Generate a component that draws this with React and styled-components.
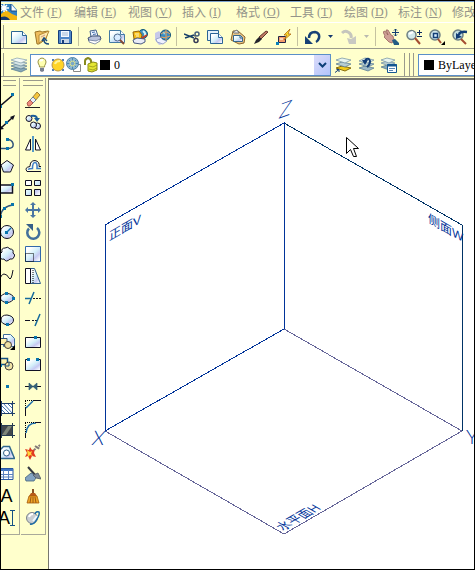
import React from 'react'
import styled, { createGlobalStyle } from 'styled-components'

const navy = '#0c3f77'
const ink = '#111122'

// All toolbar glyphs live on a 16 x 16 grid
const icons = {
    app: <>
        <path d="M0 0h11l5 6v10H0z" fill="#2f7fc1" />
        <path d="M0 10 5 6l6 4 5 2v4H0z" fill="#f2b50f" />
        <path d="M0 13q6-2 9 3H0z" fill="#14386e" />
        <path d="M3 0v8M0 4h8M0 1l6 6M6 1 0 7" stroke="#fff" strokeWidth="1.500" />
        <path d="M10 0v7h6z" fill="#fff" />
        <path d="M10 0v7h6" fill="none" stroke="#18487f" />
    </>,
    blank: <>
        <path d="M.5 2.500h11l4 4v8H.5z" fill="url(#pane)" stroke="#2c6794" />
        <path d="M11.500 2.500v4h4" fill="#fff" stroke="#2c6794" />
        <path d="M0 14.500h16" stroke="#173f63" />
    </>,
    open: <>
        <path d="M1 3l5-1 2 1 6-1-2 8-7 5H3z" fill="#efbd5d" stroke="#9b7426" />
        <path d="M5 6l10-4-3 7-7 5z" fill="#ffe9ad" stroke="#b88a35" />
        <path d="M7 8l4-2" stroke="#c98" />
        <path d="M15 15q-5 0-5-4M8 12l2-3 3 3" fill="none" stroke="#174a80" strokeWidth="1.500" />
    </>,
    save: <>
        <path d="M1.500 1.500h12l1 1v12h-13z" fill="#4f86c8" stroke="#173f7d" />
        <path d="M4 2h8v6H4z" fill="#f4f8ff" />
        <path d="M5 4h6M5 6h6" stroke="#9fb6d3" />
        <path d="M4 10h8v4H4z" fill="#c8d5e7" />
        <path d="M5 11h2v3H5z" fill="#173f7d" />
    </>,
    print: <>
        <path d="M4 2l6-1 2 6-7 1z" fill="#eaf3ff" stroke="#46658d" />
        <path d="M6 3.500l3-.5M7 5.500l3-.5" stroke="#4972ad" />
        <path d="M2 9l4-2 8 0 1 3-4 3-8-1z" fill="#b9c3dd" stroke="#3f5075" />
        <path d="M3 11l7 1 4-2v2l-5 3-6-2z" fill="#fff" stroke="#596a91" strokeWidth=".7" />
    </>,
    preview: <>
        <path d="M.5 1.500h11l4 4v8H.5z" fill="url(#pane)" stroke="#447aa3" />
        <path d="M11.500 1.500v4h4" fill="#fff" stroke="#447aa3" />
        <circle cx="8.500" cy="8.500" r="3.500" fill="#d7ebff" stroke="#536f91" />
        <path d="M11 11l4 4" stroke="#824a37" strokeWidth="2" />
    </>,
    publish: <>
        <circle cx="11" cy="5" r="4.500" fill="#3d8fbf" stroke="#12597b" />
        <path d="M11 2q3 2 2 5" stroke="#d6f3f5" fill="none" strokeWidth="2" />
        <path d="M1 3l6-1 3 4-1 4H2z" fill="#f6bd16" stroke="#93620a" />
        <path d="M3 5h4M4 7h3" stroke="#fff7ca" />
        <path d="M1 11l4-2 8 1v3l-4 2-7-1z" fill="#e9ecf7" stroke="#485982" />
        <path d="M10 9l5-3" stroke="#c53b20" strokeWidth="1.500" />
    </>,
    dwf: <>
        <path d="M0 4l4-2 5 5-1 8-4 1-4-5z" fill="#c7c9ea" />
        <path d="M1 10l6-2 5 4-4 3-6-2z" fill="#eff1ff" stroke="#9ca6ca" />
        <circle cx="10.500" cy="6" r="5" fill="#378cc3" stroke="#125176" />
        <path d="M6 5q5-4 9 0M11 1v10M6 8q4 2 9-1" fill="none" stroke="#e8a15d" />
        <path d="M8 3l2 1-1 2z" fill="#b7eef0" />
    </>,
    cut: <>
        <path d="M0 5l10 4M1 9l9-3" stroke="#173f68" strokeWidth="1.500" />
        <circle cx="13" cy="5" r="2" fill="none" stroke="#45607e" strokeWidth="1.500" />
        <circle cx="12" cy="11.500" r="2" fill="none" stroke="#353955" strokeWidth="1.500" />
        <path d="M10 6l2 3" stroke="#555" />
    </>,
    copy: <>
        <path d="M.5 1.500h11v10H.5z" fill="#e5f2f9" stroke="#2b6496" />
        <path d="M3.500 4.500h8l4 4v6h-12z" fill="url(#pane)" stroke="#2b6496" />
        <path d="M11.500 4.500v4h4" fill="#fff" stroke="#2b6496" />
    </>,
    paste: <>
        <path d="M3 2h5l7 6-1 6-5 1-8-4z" fill="#e8c586" stroke="#8b632b" />
        <path d="M3 3l4-2 2 3H4z" fill="#eee" stroke="#777" />
        <path d="M3.500 6.500h7l2 2v4h-9z" fill="url(#pane)" stroke="#35668b" />
        <path d="M10 6v3h3" fill="none" stroke="#35668b" />
    </>,
    brush: <>
        <path d="M13 2l2 1-7 7-2-2z" fill="#bd7860" stroke="#633630" />
        <path d="M6 8l3 2-3 3-5 2 2-4z" fill="#24252c" />
    </>,
    block: <>
        <path d="M2.500 7.500h7v6h-7z" fill="#f39b6d" stroke="#242447" />
        <path d="M4 9h3v2H4z" fill="#ffd4b5" />
        <path d="M0 13h3v3H0z" fill="#087fba" />
        <path d="M14 0L8 6h3L8 11l7-6h-3z" fill="#ffe22b" stroke="#b06712" strokeWidth=".8" />
    </>,
    undo: <>
        <path d="M4 9q0-6 6-6 5 1 4 6-1 3-3 4" fill="none" stroke="#174176" strokeWidth="2.500" />
        <path d="M0 7v8h8z" fill="#174176" />
    </>,
    redo: <>
        <path d="M1 4q3-3 6-1 4 2 3 6" fill="none" stroke="#c5c5bd" strokeWidth="3" />
        <path d="M6 9l4 1 5-3v8H8z" fill="#c9c9c2" />
    </>,
    pan: <>
        <path d="M0 3l2-1 3 4-2-5 2 0 3 5 2 1 1 4-2 3-3-1-5-5 1-1z" fill="#cf9f96" stroke="#8d5553" strokeWidth=".7" />
        <path d="M9 11l3-1 4 4v2h-5z" fill="#235b83" />
        <path d="M12.500 0v7M9 3.500h7M11 1.500L12.500 0 14 1.500M11 5.500L12.500 7 14 5.500" fill="none" stroke="#123f72" />
    </>,
    zoom: <>
        <circle cx="5.500" cy="6" r="4.500" fill="#d2e9ea" stroke="#6f8184" strokeWidth="1.500" />
        <path d="M3 5l4-2" stroke="#fff" strokeWidth="2" />
        <path d="M9 9l5 6" stroke="#a54d31" strokeWidth="2" />
        <path d="M13.500 1v5M11 3.500h5M11 7.500h5" stroke="#0b2b60" />
    </>,
    zoomWin: <>
        <circle cx="6" cy="6" r="5" fill="#cfe5ea" stroke="#6f8184" strokeWidth="1.500" />
        <path d="M4.500 4.500h4v4h-4z" fill="#dcf1ff" stroke="#123d76" strokeWidth="1.500" />
        <path d="M9 10l3 4" stroke="#a54d31" strokeWidth="2" />
        <path d="M16 12v4h-4z" fill="#000" />
    </>,
    zoomPrev: <>
        <circle cx="6" cy="6" r="5" fill="#c2ddde" stroke="#6f8184" strokeWidth="1.500" />
        <path d="M9 10l5 5" stroke="#a54d31" strokeWidth="2" />
        <path d="M7 6q0-4 8-3" fill="none" stroke="#123d76" strokeWidth="2.500" />
        <path d="M4 4v6l6-2z" fill="#123d76" />
    </>,
    layers: <>
        <path d="M0 12l6-2 10 2-6 3z" fill="#87a9b7" stroke="#50748e" strokeWidth=".7" />
        <path d="M0 9l6-2 10 2-6 3z" fill="#b7cdd1" stroke="#50748e" strokeWidth=".7" />
        <path d="M0 6l6-2 10 2-6 3z" fill="#d8e7e7" stroke="#6d8ca0" strokeWidth=".7" />
        <path d="M0 3l6-2 10 2-6 3z" fill="#f3f9f6" stroke="#829eae" strokeWidth=".7" />
    </>,
    layerSet: <>
        <path d="M1 11l6-2 9 2-6 3z" fill="#f2ca18" stroke="#876c0b" />
        <path d="M1 7l6-2 9 2-6 3z" fill="#b7cdd1" stroke="#50748e" strokeWidth=".7" />
        <path d="M1 3l6-2 9 2-6 3z" fill="#e8f4ee" stroke="#6d8ca0" strokeWidth=".7" />
        <path d="M0 15.500l4-3M1.500 12.500H4V15" fill="none" stroke="#123d76" />
    </>,
    layerPrev: <>
        <path d="M1 11l6-2 9 2-6 3z" fill="#9db9c5" stroke="#50748e" strokeWidth=".7" />
        <path d="M1 7l6-2 9 2-6 3z" fill="#b7cdd1" stroke="#50748e" strokeWidth=".7" />
        <path d="M1 4l6-3 9 2-6 3z" fill="#e8f4ee" stroke="#6d8ca0" strokeWidth=".7" />
        <path d="M7 3q4-3 5 1 0 4-3 6" fill="none" stroke="#123d76" strokeWidth="2" />
        <path d="M4 3h6l-3 5z" fill="#123d76" />
    </>,
    layerStates: <>
        <path d="M0 10l6-2 8 2-6 3z" fill="#87a9b7" stroke="#50748e" strokeWidth=".7" />
        <path d="M0 6l6-2 8 2-6 3z" fill="#b7cdd1" stroke="#6d8ca0" strokeWidth=".7" />
        <path d="M0 3l6-2 8 2-6 3z" fill="#e8f4ee" stroke="#6d8ca0" strokeWidth=".7" />
        <path d="M6.500 7.500h9v8h-9z" fill="#fff" stroke="#155791" />
        <path d="M6 8.500h10" stroke="#155791" strokeWidth="2" />
        <path d="M8 11.500h6M8 13.500h4" stroke="#5986b3" />
    </>,
    bulb: <>
        <path d="M5.500 10q0-2-1-3a4 4 0 1 1 7 0q-1 1-1 3z" fill="#ffffb0" stroke="#9a9448" />
        <path d="M6 4q1-1 3-1" stroke="#fff" strokeWidth="2" fill="none" />
        <path d="M6 11h4v3l-2 1-2-1z" fill="#787f90" />
    </>,
    sun: <>
        <path d="M2 2h2v2H2zM12 2h2v2h-2zM2 12h2v2H2zM12 12h2v2h-2z" fill="#4d7cb8" />
        <circle cx="8" cy="8" r="6" fill="#ffd428" stroke="#b9964a" />
        <path d="M5 7q1-3 5-3" fill="none" stroke="#fff49c" strokeWidth="2" />
    </>,
    freeze: <>
        <path d="M7.500 7.500h7v7h-7z" fill="#fff" stroke="#888" />
        <circle cx="6.500" cy="6.500" r="6" fill="#8fb9d2" stroke="#5184a9" />
        <path d="M6.500 1v11M1 6.500h11M3 3l7 7M3 10l7-7" stroke="#4a87b4" />
        <circle cx="6.500" cy="6.500" r="2.500" fill="#7aa9c6" stroke="#e7e88d" />
    </>,
    lock: <>
        <path d="M3 8V4q0-2 3-3 4 1 3 6" fill="none" stroke="#87891e" strokeWidth="2" />
        <path d="M6 7l5-2 4 1v7l-5 2-4-1z" fill="#e4e632" stroke="#8b8b15" />
        <path d="M7 9l4 1 4-2M7 12l4 1 4-2" fill="none" stroke="#8b8b15" strokeWidth=".7" />
    </>,
    line: <>
        <path d="M1 14L14 3" stroke={ink} strokeWidth="1.500" />
        <path d="M0 13h3v3H0zM12 1h3v3h-3z" fill="#0875ad" />
    </>,
    ray: <>
        <path d="M1 15L14 3" stroke={ink} strokeWidth="1.500" />
        <path d="M16 1l-2 5-3-3zM0 16l1-5 4 4z" fill={ink} />
        <path d="M6 7h3v3H6z" fill="#0875ad" />
    </>,
    polyline: <>
        <path d="M0 12.500h9q6 0 5-5-1-4-6-4" fill="none" stroke="#31547c" strokeWidth="1.500" />
        <path d="M7 2h3v3H7zM7 11h3v3H7z" fill="#0875ad" />
    </>,
    polygon: <path d="M8 2.500l6.500 4.500-3 7h-7L2 7z" fill="url(#pane)" stroke={ink} />,
    rect: <>
        <path d="M.5 5h13v8H.5z" fill="url(#pane)" stroke={ink} strokeWidth="1.500" />
        <path d="M12 3h3v3h-3zM0 11h2v3H0z" fill="#0875ad" />
    </>,
    arc: <>
        <path d="M1 15Q3 4 14 3" fill="none" stroke="#31547c" strokeWidth="1.500" />
        <path d="M12 1h3v3h-3zM4 5h3v3H4zM0 13h3v3H0z" fill="#0875ad" />
    </>,
    circle: <>
        <circle cx="8" cy="8" r="6.500" fill="url(#pane)" stroke={ink} />
        <path d="M8 8l4-4" stroke="#146ead" strokeWidth="1.500" />
        <path d="M6 7h3v3H6z" fill="#0875ad" />
    </>,
    cloud: <path d="M3 6q-1-4 3-4 3-2 5 1 4 0 3 4 3 2 1 4-1 3-4 2-4 4-6 0-4 1-4-3 0-3 2-4z" fill="url(#pane)" stroke={ink} />,
    spline: <path d="M0 14Q2 6 5 6t5 4 4-8" fill="none" stroke={ink} />,
    ellipse: <>
        <ellipse cx="8" cy="8" rx="6.500" ry="4.500" fill="url(#pane)" stroke={ink} />
        <path d="M6 2h3v3H6zM13 7h3v3h-3zM6 11h3v3H6z" fill="#0875ad" />
    </>,
    ellipseArc: <>
        <path d="M2 8q0-5 6-5 6.500 1 6.500 5T9 13Q2 12 2 8" fill="url(#pane)" stroke={ink} />
        <path d="M7 11h3v3H7z" fill="#0875ad" />
    </>,
    insert: <>
        <path d="M4.500 .5h7l4 4v8h-11z" fill="url(#pane)" stroke="#3e6f9c" />
        <path d="M0 4.500h8v6H0z" fill="#fff2ac" stroke="#31547c" />
        <circle cx="9" cy="11" r="3.500" fill="#efe2a5" stroke="#453f3a" />
        <path d="M16 11v5h-5z" fill="#000" />
    </>,
    makeBlock: <>
        <path d="M1.500 2.500h7v6h-7z" fill="#fff2ac" stroke="#145184" strokeWidth="1.500" />
        <circle cx="10" cy="10" r="4" fill="#efe2a5" stroke="#453f3a" />
        <path d="M10 6v4H6" fill="none" stroke="#145184" />
        <path d="M0 8h3v3H0z" fill="#0875ad" />
    </>,
    point: <path d="M7 7h3v3H7z" fill="#0875ad" />,
    hatch: <>
        <path d="M2 3h12v10H2z" fill="#fff" />
        <path d="M2 9l4 4M2 5l8 8M4 3l9 10M8 3l6 6M11 3l3 3" stroke="#4578ab" />
        <path d="M0 3.500h16M0 13.500h16M2.500 1v15M13.500 1v15" stroke="#203f6a" />
    </>,
    gradient: <>
        <path d="M2 3h12v10H2z" fill="#42474c" />
        <path d="M3 13L9 4h4L7 13z" fill="#7d8478" />
        <path d="M0 3.500h16M0 13.500h16M2.500 1v15M13.500 1v15" stroke="#253a52" />
    </>,
    region: <>
        <path d="M.5 14.500v-8l4-4h6l5 12z" fill="url(#pane)" stroke="#31678e" strokeWidth="1.500" />
        <circle cx="7.500" cy="9" r="3" fill="#fff" stroke="#315f85" />
    </>,
    table: <>
        <path d="M0 2.500h14v11H0z" fill="#fff" stroke="#2957a2" />
        <path d="M0 3h14v2H0z" fill="#3f75c4" />
        <path d="M0 8.500h14M0 11h14M4.500 4v9M9.500 4v9" stroke="#5b82be" />
    </>,
    erase: <>
        <path d="M7 6l5-6 3 3-5 6z" fill="#f5c63c" stroke="#81652c" strokeWidth=".8" />
        <path d="M5 8l3-3 3 3-4 4z" fill="#e9eef5" stroke="#4f6c90" strokeWidth=".8" />
        <path d="M2 11l3-3 3 3-3 3H3z" fill="#ef8b7c" stroke="#9a483f" strokeWidth=".8" />
        <path d="M0 15.500h15" stroke="#222" />
    </>,
    copyObj: <>
        <circle cx="4" cy="4.500" r="3" fill="url(#pane)" stroke={ink} />
        <circle cx="12.500" cy="12" r="3" fill="url(#pane)" stroke={ink} />
        <circle cx="8.500" cy="11" r="3" fill="url(#pane)" stroke={ink} />
        <path d="M6 2q6-1 6 3" stroke="#1a5c98" strokeWidth="2" fill="none" />
        <path d="M9 4h6l-3 4z" fill="#1a5c98" />
    </>,
    mirror: <>
        <path d="M5.500 3v11H.5zM10.500 3v11h5z" fill="#fff" stroke={ink} />
        <path d="M8 0v16" stroke="#1d78c4" strokeWidth="1.500" />
    </>,
    offset: <>
        <path d="M2 13.500q-3-4 3-5 0-6 5-6 5 1 4 6 1 0 2 0M2 13.500h14" fill="#fffff0" stroke={ink} />
        <path d="M3 11.500q1-1 4.500-1 0-6 2.500-6t2 6h4" fill="none" stroke="#3f7fc6" strokeWidth="1.500" />
    </>,
    array: <path d="M.5 .5h6v5h-6zM9.500 .5h6v5h-6zM.5 9.500h6v6h-6zM9.500 9.500h6v6h-6z" fill="url(#pane)" stroke={ink} />,
    move: <path d="M8 0l3 3H9v4h4V5l3 3-3 3V9H9v4h2l-3 3-3-3h2V9H3v2L0 8l3-3v2h4V3H5z" fill="#4a76a3" />,
    rotate: <>
        <path d="M4 4.500a6 6 0 1 0 8-.500" fill="none" stroke="#43719b" strokeWidth="2.500" />
        <path d="M1 0h7v7z" fill="#365f88" />
    </>,
    scale: <>
        <path d="M.5 .5h15v15H.5z" fill="url(#pane)" stroke="#3269aa" />
        <path d="M.5 7.500h8v8h-8z" fill="none" stroke="#000" strokeDasharray="1 1" />
    </>,
    stretch: <>
        <path d="M5.500 .5h4l6 15h-10z" fill="url(#pane)" stroke="#2f5e8c" />
        <path d="M.5 .5h5v15h-5z" fill="#fff" stroke={ink} />
        <path d="M8 2v13" stroke="#000" strokeDasharray="1 1" />
    </>,
    trim: <>
        <path d="M0 8.500h6M4 14l5-12" stroke="#146a9c" strokeWidth="1.500" />
        <path d="M8 8.500h8" stroke={ink} strokeDasharray="2 1" />
    </>,
    extend: <>
        <path d="M0 8.500h5M7 8.500h2M10 8.500h2" stroke={ink} />
        <path d="M10 14l5-12" stroke="#146a9c" strokeWidth="1.500" />
    </>,
    breakPt: <>
        <path d="M.5 3.500h15v10H.5z" fill="url(#pane)" stroke={ink} />
        <path d="M9 2h3v3H9z" fill="#0875ad" />
    </>,
    breakObj: <>
        <path d="M.5 3.500h15v11H.5z" fill="url(#pane)" />
        <path d="M3 3.500H.5v11h15v-11H13" fill="none" stroke={ink} />
        <path d="M2 2h3v3H2zM11 2h3v3h-3z" fill="#0875ad" />
    </>,
    join: <>
        <path d="M0 8.500h16" stroke={ink} />
        <path d="M4 5l4 3.500L4 12zM12 5L8 8.500l4 3.500z" fill="#325e75" stroke="#325e75" strokeWidth=".7" />
    </>,
    chamfer: <>
        <path d="M.5 16V8M8 .5h8" stroke={ink} />
        <path d="M0 .5h8M.5 1v7" stroke="#000" strokeDasharray="1 1" />
        <path d="M1 8l7-7" stroke="#1669aa" strokeWidth="1.500" />
    </>,
    fillet: <>
        <path d="M1 11Q2 1 11 1" fill="none" stroke="#1669aa" strokeWidth="1.500" />
        <path d="M0 .5h9M.5 1v9" stroke="#000" strokeDasharray="1 1" />
        <path d="M.5 16v-5M10 .5h6" stroke={ink} />
    </>,
    explode: <>
        <path d="M0 5l4 1 1-3 2 3 3-1-1 4 2 4-4-1-2 4-2-4-3 1 2-4z" fill="#e13c21" />
        <path d="M2 6l3 2 2-1-1 3 2 2-3-1-2 2z" fill="#ffd43b" />
        <path d="M9 6l6-5M10 2l5 3" stroke="#827a78" strokeWidth="2" strokeDasharray="2 1" />
    </>,
    dust: <>
        <path d="M3 1l8 9" stroke="#343941" strokeWidth="2" />
        <path d="M0 12l6-5 6 3-3 5-8 0z" fill="#83a3c1" stroke="#42627e" strokeWidth=".8" />
        <path d="M8 9l5-2 3 6-5-1z" fill="#7d8a97" stroke="#4c5763" strokeWidth=".8" />
    </>,
    broom: <>
        <path d="M8 1v5" stroke="#875125" strokeWidth="2" />
        <path d="M6 5h4l2 3H4z" fill="#b85b17" />
        <path d="M4 8h8l2 7H2z" fill="#eea526" stroke="#a65b0c" strokeWidth=".8" />
        <path d="M6 9l-1 6M8 9v6M10 9l1 6" stroke="#9b5713" />
    </>,
    orbit: <>
        <circle cx="7" cy="8" r="5.500" fill="#c9ced2" stroke="#7b828a" />
        <path d="M4 7q1-3 4-3" stroke="#fff" strokeWidth="2" fill="none" />
        <path d="M5 14q4 1 7-5 3-5 2-7-3-1-4 2" fill="none" stroke="#1b6ca6" strokeWidth="1.500" />
        <path d="M8 11l4-5" stroke="#eef9ff" strokeWidth="2" />
    </>,
}

const standardTools = [
    [['blank', '新建'], ['open', '打开'], ['save', '保存']],
    [['print', '打印'], ['preview', '打印预览'], ['publish', '发布'], ['dwf', '三维 DWF']],
    [['cut', '剪切'], ['copy', '复制'], ['paste', '粘贴'], ['brush', '特性匹配'], ['block', '块编辑器']],
    [['undo', '放弃'], ['redo', '重做']],
    [['pan', '平移'], ['zoom', '实时缩放'], ['zoomWin', '窗口缩放'], ['zoomPrev', '缩放上一个']],
]

const menus = [['文件', 'F'], ['编辑', 'E'], ['视图', 'V'], ['插入', 'I'], ['格式', 'O'], ['工具', 'T'], ['绘图', 'D'], ['标注', 'N'], ['修改', 'M']]

const drawTools = ['line', 'ray', 'polyline', 'polygon', 'rect', 'arc', 'circle', 'cloud', 'spline', 'ellipse', 'ellipseArc', 'insert', 'makeBlock', 'point', 'hatch', 'gradient', 'region', 'table', 'text', 'mtext']

const modifyTools = ['erase', 'copyObj', 'mirror', 'offset', 'array', 'move', 'rotate', 'scale', 'stretch', 'trim', 'extend', 'breakPt', 'breakObj', 'join', 'chamfer', 'fillet', 'explode', 'dust', 'broom', 'orbit']

const Icon = ({ name }) => <Glyph viewBox="0 0 16 16" aria-hidden="true">{icons[name]}</Glyph>

const Caret = ({ off }) => (
    <ToolButton $narrow aria-label={off ? '重做列表' : '放弃列表'}>
        <CaretGlyph viewBox="0 0 5 3"><path d="M0 0h5L2.500 3z" fill={off ? '#b9b9b0' : '#16386f'} /></CaretGlyph>
    </ToolButton>
)

const SideTool = ({ name }) => {
    if (name === 'text') return <ToolButton aria-label="单行文字"><Letter>A</Letter></ToolButton>
    if (name === 'mtext') return (
        <ToolButton aria-label="多行文字">
            <Letter>A</Letter>
            <BeamGlyph viewBox="0 0 5 16"><path d="M0 .5h5M0 15.500h5M2.500 0v16" stroke="#145184" /></BeamGlyph>
        </ToolButton>
    )
    return <ToolButton aria-label={name}><Icon name={name} /></ToolButton>
}

const Drawing = () => (
    <Sheet>
        <g shapeRendering="crispEdges" fill="none">
            <path d="M56 351L235 454L413 351L235 249" stroke="#666699" />
            <path d="M235 43L413 145V351" stroke="#003366" />
            <path d="M235 249L56 351V145L235 43V249" stroke="#003399" />
        </g>
        <PlaneText transform="translate(60 161) skewY(-30)">正面V</PlaneText>
        <PlaneText transform="translate(379 142) skewY(30)">侧面W</PlaneText>
        <PlaneText transform="translate(234 451) rotate(-30) skewX(30)">水平面H</PlaneText>
        <AxisText transform="translate(229 39) skewY(-20) skewX(-12)">Z</AxisText>
        <AxisText transform="translate(42 365) skewX(-12)">X</AxisText>
        <AxisText transform="translate(417 364)">Y</AxisText>
        <path d="M297.500 57.500v16l4-4 3 7h3l-3-8h5z" fill="#fff" stroke="#000" />
    </Sheet>
)

export default function App() {
    return (
        <Window>
            <Global />
            <Defs aria-hidden="true">
                <linearGradient id="pane" x1="0" y1="0" x2="1" y2="1">
                    <stop offset="0.200" stopColor="#ffffff" />
                    <stop offset="0.500" stopColor="#d3effa" />
                    <stop offset="0.700" stopColor="#c6c9f2" />
                    <stop offset="0.900" stopColor="#f4f6fd" />
                </linearGradient>
            </Defs>

            <MenuBar>
                <AppMark><Icon name="app" /></AppMark>
                {menus.map(([label, key]) => (
                    <MenuItem key={key}>{label}<Mnemonic>(<u>{key}</u>)</Mnemonic></MenuItem>
                ))}
            </MenuBar>

            <Toolbar>
                <Grip />
                {standardTools.map((group, i) => (
                    <React.Fragment key={i}>
                        {i > 0 && <Separator />}
                        {group.map(([name, label]) => (
                            <React.Fragment key={name}>
                                <ToolButton aria-label={label}><Icon name={name} /></ToolButton>
                                {(name === 'undo' || name === 'redo') && <Caret off={name === 'redo'} />}
                            </React.Fragment>
                        ))}
                    </React.Fragment>
                ))}
            </Toolbar>

            <Toolbar $tall>
                <Grip />
                <ToolButton aria-label="图层特性"><Icon name="layers" /></ToolButton>
                <Combo $width="301px">
                    <ComboIcons>
                        {['bulb', 'sun', 'freeze', 'lock'].map(name => <Icon key={name} name={name} />)}
                    </ComboIcons>
                    <Swatch />
                    <ComboSelect aria-label="图层"><option>0</option></ComboSelect>
                    <Drop>
                        <DropGlyph viewBox="0 0 9 6"><path d="M1 1l3.500 3.500L8 1" fill="none" stroke={navy} strokeWidth="2" /></DropGlyph>
                    </Drop>
                </Combo>
                <ToolButton aria-label="置为当前"><Icon name="layerSet" /></ToolButton>
                <ToolButton aria-label="上一个图层"><Icon name="layerPrev" /></ToolButton>
                <ToolButton aria-label="图层状态"><Icon name="layerStates" /></ToolButton>
                <BarEnd />
                <Grip $double />
                <Combo $width="160px">
                    <Swatch />
                    <ComboSelect aria-label="颜色"><option>ByLayer</option></ComboSelect>
                </Combo>
            </Toolbar>

            <Workspace>
                <SideBar $cut>
                    <SideGrip />
                    {drawTools.map(name => <SideTool key={name} name={name} />)}
                </SideBar>
                <SideBar>
                    <SideGrip />
                    {modifyTools.map(name => <SideTool key={name} name={name} />)}
                </SideBar>
                <Canvas><Drawing /></Canvas>
            </Workspace>
        </Window>
    )
}

const Global = createGlobalStyle`
    body {
        margin: 0;
        background: #000;
    }
    * {
        box-sizing: border-box;
    }
`

const Window = styled.div`
    display: flex;
    flex-direction: column;
    height: 100vh;
    min-height: 540px;
    overflow: hidden;
    border: 1px solid #000;
    background: #ffffcc;
    font-family: "Liberation Serif", "Noto Sans CJK SC", serif;
    font-size: 12px;
`

const Defs = styled.svg`
    position: absolute;
    width: 0;
    height: 0;
`

const Glyph = styled.svg`
    display: block;
    flex: none;
    width: 16px;
    height: 16px;
`

const MenuBar = styled.nav`
    display: flex;
    flex: none;
    height: 22px;
    border-top: 1px solid #7da2ce;
    border-bottom: 1px solid #fff;
`

const AppMark = styled.div`
    flex: none;
    width: 19px;
    padding-top: 2px;
`

const MenuItem = styled.button`
    display: flex;
    flex: none;
    align-items: center;
    width: 54px;
    padding: 0;
    border: 0;
    background: none;
    color: #94948a;
    font: inherit;
    white-space: nowrap;
`

const Mnemonic = styled.span`
    padding-left: 3px;
`

const Toolbar = styled.div`
    display: flex;
    flex: none;
    align-items: center;
    height: ${props => props.$tall ? '28px' : '26px'};
    padding-top: ${props => props.$tall ? '4px' : '2px'};
    border-bottom: 1px solid #9a9a8c;
    overflow: hidden;
`

const Grip = styled.i`
    flex: none;
    align-self: stretch;
    width: ${props => props.$double ? '5px' : '3px'};
    margin-right: ${props => props.$double ? '4px' : '3px'};
    border-right: 1px solid #9a9a8c;
    border-left: ${props => props.$double ? '1px solid #9a9a8c' : '0'};
`

const Separator = styled.i`
    flex: none;
    width: 2px;
    height: 19px;
    margin: 0 2px;
    border-left: 1px solid #c5c2a0;
`

const ToolButton = styled.button`
    display: flex;
    flex: none;
    align-items: center;
    justify-content: center;
    width: ${props => props.$narrow ? '13px' : '23px'};
    height: 22px;
    padding: 0;
    border: 0;
    background: none;
`

const CaretGlyph = styled.svg`
    width: 5px;
    height: 3px;
`

const Combo = styled.div`
    display: flex;
    flex: none;
    align-items: center;
    width: ${props => props.$width};
    height: 22px;
    padding-left: 3px;
    border: 1px solid #5a8fc8;
    background: #fff;
`

const ComboIcons = styled.div`
    display: flex;
`

const Swatch = styled.i`
    flex: none;
    width: 10px;
    height: 10px;
    margin: 0 4px 0 2px;
    background: #000;
`

const ComboSelect = styled.select`
    flex: 1;
    min-width: 0;
    padding: 0;
    border: 0;
    outline: none;
    appearance: none;
    background: none;
    color: #000;
    font: inherit;
`

const Drop = styled.span`
    display: flex;
    align-self: stretch;
    align-items: center;
    justify-content: center;
    width: 16px;
    background: linear-gradient(135deg, #dcdcfa, #b3c4fa);
`

const DropGlyph = styled.svg`
    width: 9px;
    height: 6px;
`

const BarEnd = styled.i`
    flex: none;
    align-self: stretch;
    width: 5px;
    margin-right: 4px;
    border-right: 1px solid #9a9a8c;
`

const Workspace = styled.div`
    display: flex;
    flex: 1;
    min-height: 0;
    padding-top: 1px;
`

const SideBar = styled.div`
    display: flex;
    flex: none;
    flex-direction: column;
    align-self: flex-start;
    align-items: ${props => props.$cut ? 'flex-end' : 'center'};
    width: ${props => props.$cut ? '19px' : '25px'};
    margin-right: 1px;
    padding-right: ${props => props.$cut ? '1px' : '0'};
    padding-bottom: 5px;
    border-right: 1px solid #a9a99a;
    border-bottom: 1px solid #a9a99a;
    overflow: hidden;
`

const SideGrip = styled.i`
    align-self: stretch;
    height: 6px;
    margin: 2px 2px 3px;
    border-top: 1px solid #9a9a8c;
    border-bottom: 1px solid #9a9a8c;
`

const Letter = styled.span`
    font-family: "Liberation Sans", sans-serif;
    font-size: 18px;
    line-height: 20px;
`

const BeamGlyph = styled.svg`
    flex: none;
    width: 5px;
    height: 16px;
`

const Canvas = styled.main`
    flex: 1;
    min-width: 0;
    margin-left: 1px;
    border-top: 2px solid #77776f;
    border-left: 1px solid #77776f;
    background: #fff;
`

const Sheet = styled.svg`
    display: block;
    width: 100%;
    height: 100%;
`

const PlaneText = styled.text`
    fill: #003399;
    font-family: "Liberation Sans Narrow", "Liberation Sans", "Noto Sans CJK SC", sans-serif;
    font-size: 12px;
`

const AxisText = styled.text`
    fill: #003399;
    font-family: "Liberation Sans Narrow", Lato, "Liberation Sans", sans-serif;
    font-size: 20px;
    font-weight: 300;
`
